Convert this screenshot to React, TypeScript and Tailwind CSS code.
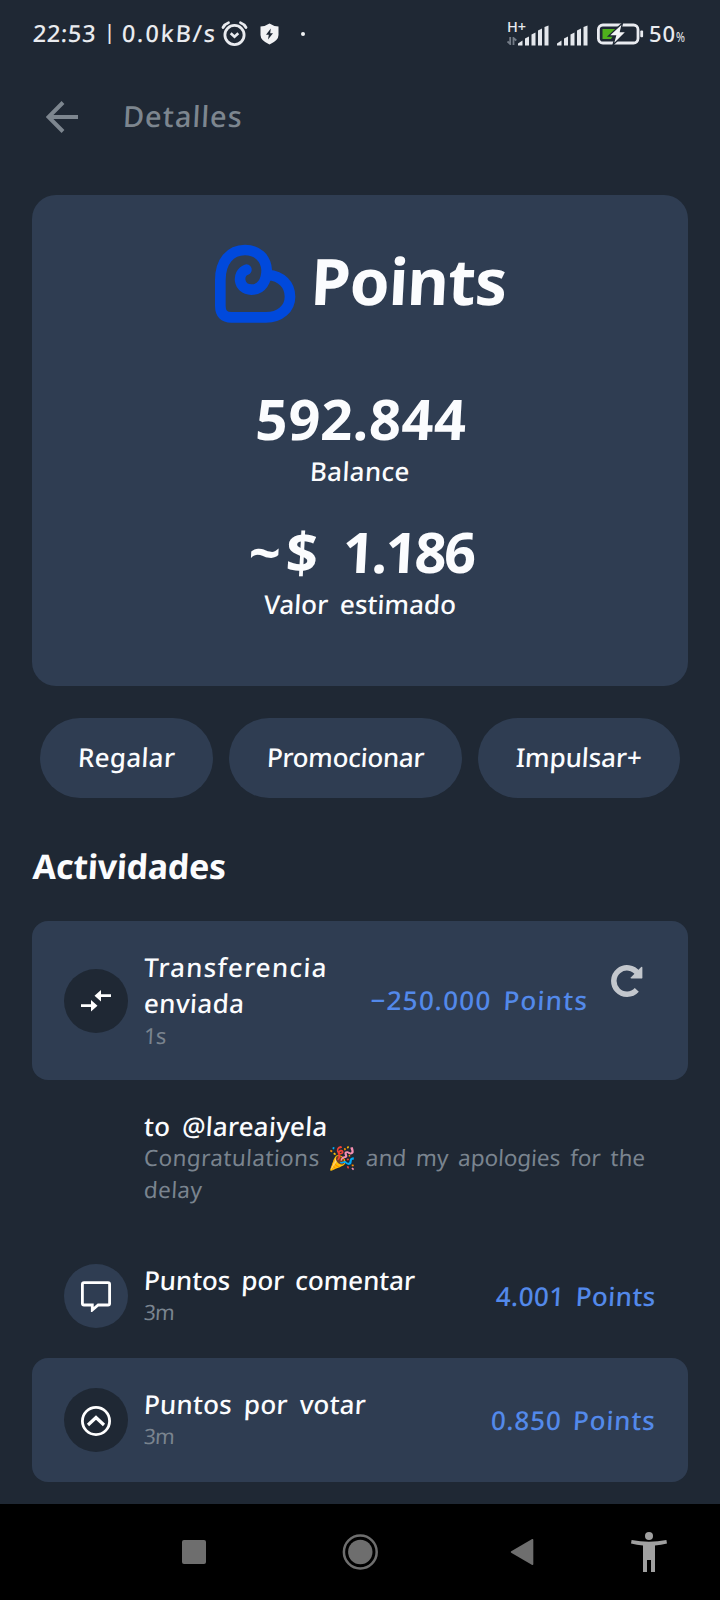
import React from "react";

function Skewed({ className, children }: { className: string; children: React.ReactNode }) {
  return <span className={`inline-block -skew-x-3 whitespace-nowrap ${className}`}>{children}</span>;
}

function AlarmIcon() {
  return (
    <svg width="27" height="26" viewBox="0 0 27 26" fill="none" stroke="#e9ebef" strokeWidth="2.8">
      <circle cx="13.5" cy="14" r="9.6" />
      <path d="M2 6.5Q4 3 7.5 1.8M25 6.5Q23 3 19.5 1.8" strokeLinecap="round" />
      <path d="M9.7 12.2l3.8 3.6 3.8-3.6" strokeWidth="2.6" />
    </svg>
  );
}

function ShieldIcon() {
  return (
    <svg width="19" height="22" viewBox="0 0 19 22">
      <path d="M9.5.5Q13 3 18.5 3.6V12Q18.5 17.5 9.5 21.5Q.5 17.5.5 12V3.6Q6 3 9.5.5Z" fill="#f1f2f4" />
      <path d="M10.8 5.5L6 11.8H8.8L8 16.5L13 10.2H10.2Z" fill="#1f2834" />
    </svg>
  );
}

function SignalIcon() {
  return (
    <svg width="31" height="21" viewBox="0 0 31 21" fill="#e4e7ec">
      <path d="M0 20.5V18.5L4.5 15.5V20.5ZM7 20.5V13.5L11 11.5V20.5ZM13.5 20.5V9.5L17.5 7.5V20.5ZM20 20.5V5.5L24 3.5V20.5ZM26.5 20.5V2L30.5 .5V20.5Z" />
    </svg>
  );
}

function BatteryIcon() {
  return (
    <svg width="47" height="22" viewBox="0 0 47 22">
      <rect x="1.4" y="2" width="39.6" height="18" rx="4.5" fill="none" stroke="#e9ebf0" strokeWidth="2.8" />
      <rect x="43.3" y="7.6" width="2.8" height="6.6" rx="1" fill="#e9ebf0" />
      <path d="M5.5 6H20L14 16H5.5Z" fill="#4fb01c" />
      <path d="M25.5 0L11.5 13H18.5L16 22L29.5 8.5H23.5Z" fill="#f4f5f7" stroke="#1f2834" strokeWidth="1.3" />
    </svg>
  );
}

function HeartLogo() {
  return (
    <svg width="84" height="82" viewBox="99 189 252 246" fill="none" stroke="#0049dc" strokeWidth="32" strokeLinecap="round">
      <path d="M199 269C171 279 173 328 214 329C245 329 260 302 260 270C258 234 232 210 195 210C150 210 121 245 121 300V378Q121 412 154 412H258C300 412 330 386 330 350C330 314 305 288 264 285" />
    </svg>
  );
}

function TransferIcon() {
  return (
    <svg width="30" height="22" viewBox="0 0 30 22" fill="#fff">
      <path d="M0 14.2H10V10L16.5 15.8L10 21.4V17H0ZM30 4.2H20V0L13.5 5.8L20 11.4V7H30Z" />
    </svg>
  );
}

function CommentIcon() {
  return (
    <svg width="32" height="32" viewBox="0 0 32 32" fill="none" stroke="#fff" strokeWidth="2.8">
      <path d="M4 2.6H28Q29.6 2.6 29.6 4.2V23.4Q29.6 25 28 25H18.2L12.3 30V25H4Q2.4 25 2.4 23.4V4.2Q2.4 2.6 4 2.6Z" />
    </svg>
  );
}

function VoteIcon() {
  return (
    <svg width="32" height="32" viewBox="0 0 32 32" fill="none" stroke="#fff" strokeWidth="2.8">
      <circle cx="16" cy="16" r="13.6" />
      <path d="M8 20L16 12.5L24 20" strokeWidth="3.2" />
    </svg>
  );
}

function Badge({ className, children }: { className: string; children: React.ReactNode }) {
  return (
    <div className={`flex size-16 shrink-0 items-center justify-center rounded-full ${className}`}>{children}</div>
  );
}

function Pill({ className, children }: { className: string; children: React.ReactNode }) {
  return (
    <button className={`flex h-20 items-center justify-center rounded-full bg-[#2f3d52] pb-px text-[26px] font-medium ${className}`}>
      {children}
    </button>
  );
}

export default function App() {
  return (
    <div className="flex h-[1600px] w-[720px] flex-col overflow-hidden bg-[#1f2834] font-['Noto_Sans','Noto_Color_Emoji',sans-serif] font-medium text-[#fbfcfe]">
      <div className="flex h-[66px] shrink-0 items-start pr-[33px] pl-[33px] text-[#e9ebef]">
        <div className="mt-[17px] flex w-[187px] text-[23.5px] leading-8">
          <Skewed className="w-[71px] tracking-[0.6px]">22:53</Skewed>
          <span className="w-[18px] text-[20px] leading-[30px]">|</span>
          <Skewed className="tracking-[1.8px]">0.0kB/s</Skewed>
        </div>
        <div className="mt-[21px] ml-px"><AlarmIcon /></div>
        <div className="mt-[23px] ml-[12px]"><ShieldIcon /></div>
        <div className="mt-[32px] ml-[22px] size-1 rounded-full bg-[#f1f2f4]" />
        <div className="mt-[19px] ml-auto flex w-[10px] flex-col">
          <span className="h-[16px] text-[14.5px] leading-[15px] whitespace-nowrap">H+</span>
          <svg className="mt-[2px]" width="10" height="8" viewBox="0 0 10 8" fill="none" stroke="#747c87" strokeWidth="1.8">
            <path d="M3.2 0V7L.5 4.5M6.5 8V1L9.3 3.5" />
          </svg>
        </div>
        <div className="mt-[24.5px] ml-px"><SignalIcon /></div>
        <div className="mt-[24.5px] ml-2"><SignalIcon /></div>
        <div className="mt-[23px] ml-[9px]"><BatteryIcon /></div>
        <div className="mt-[16.5px] ml-[5px] flex w-[38px] items-baseline leading-8">
          <span className="text-[22px] tracking-[0.8px]">50</span>
          <span className="origin-left scale-x-80 text-[13.5px] font-normal">%</span>
        </div>
      </div>

      <header className="flex h-[129px] shrink-0 items-start pt-[30px] pl-[46px] text-[#7d868f]">
        <svg className="mt-[5px]" width="33" height="32" viewBox="0 0 33 32" fill="none" stroke="#7d868f" strokeWidth="4">
          <path d="M32 16H3M17 1.5L2.5 16L17 30.5" />
        </svg>
        <Skewed className="ml-[44px] text-[29px] leading-10 tracking-[1px]">Detalles</Skewed>
      </header>

      <section className="mx-8 flex h-[491px] shrink-0 flex-col items-center rounded-3xl bg-[#2f3d52] pt-[48px]">
        <div className="flex h-20 items-start gap-[14px]">
          <HeartLogo />
          <Skewed className="mt-[2px] text-[64px] leading-[72px] font-bold tracking-[-0.8px]">Points</Skewed>
        </div>
        <Skewed className="mt-[63px] ml-[2px] text-[56px] leading-16 font-bold tracking-[0.4px]">592.844</Skewed>
        <Skewed className="mt-1 text-[26px] leading-[34px] tracking-[0.3px]">Balance</Skewed>
        <Skewed className="mt-[31px] ml-[3px] text-[56px] leading-16 font-bold">
          <span className="tracking-[5px]">~$ </span>
          <span className="tracking-[-2.5px]">1.186</span>
        </Skewed>
        <Skewed className="mt-1 ml-px text-[26px] leading-[34px] [word-spacing:5px]">Valor estimado</Skewed>
      </section>

      <div className="mx-10 mt-[32px] flex shrink-0 justify-between">
        <Pill className="w-[173px]"><Skewed className="tracking-[0.3px]">Regalar</Skewed></Pill>
        <Pill className="w-[233px]"><Skewed className="tracking-[-0.3px]">Promocionar</Skewed></Pill>
        <Pill className="w-[202px]"><Skewed className="tracking-[-0.1px]">Impulsar+</Skewed></Pill>
      </div>

      <h2 className="mt-[44px] ml-[33px] h-12 shrink-0 text-[34px] leading-12 font-bold">
        <Skewed className="tracking-[-0.3px]">Actividades</Skewed>
      </h2>

      <div className="mx-8 mt-[31px] flex h-[159px] shrink-0 rounded-2xl bg-[#2f3d52] pt-[28px] pr-[45px] pl-8">
        <Badge className="mt-5 bg-[#1f2834]"><TransferIcon /></Badge>
        <div className="ml-[16px] flex flex-col items-start text-[26px] leading-9">
          <Skewed className="tracking-[1.2px]">Transferencia</Skewed>
          <Skewed className="tracking-[0.4px]">enviada</Skewed>
          <Skewed className="text-[22px] leading-7 font-normal tracking-[-0.5px] text-[#7a848f]">1s</Skewed>
        </div>
        <Skewed className="mt-[33px] ml-auto text-[26px] leading-9 tracking-[1.2px] text-[#5389ea] [word-spacing:4px]">−250.000 Points</Skewed>
        <svg className="mt-[16px] ml-[24px] shrink-0" width="32" height="32" viewBox="0 0 32 32" fill="none">
          <path d="M26.8 8.4A13.2 13.2 0 1 0 25.8 24.9" stroke="#c3c7cd" strokeWidth="5.5" />
          <path d="M30.2 2Q31.4 1.2 31.4 3V12.4Q31.4 13.6 30.2 13.6H20.5Q19 13.4 20 12.2Z" fill="#c3c7cd" />
        </svg>
      </div>

      <div className="ml-[144px] flex h-[154px] shrink-0 flex-col items-start pt-[29px]">
        <Skewed className="text-[26px] leading-[34px] tracking-[0.2px] [word-spacing:5px]">to @lareaiyela</Skewed>
        <div className="flex h-[30.5px] text-[22.5px] leading-[30.5px] font-normal text-[#7a848f]">
          <Skewed className="w-[184px] tracking-[0.4px]">Congratulations</Skewed>
          <span className="w-[38px]">🎉</span>
          <Skewed className="tracking-[-0.05px] [word-spacing:4px]">and my apologies for the</Skewed>
        </div>
        <Skewed className="text-[22.5px] leading-[31px] font-normal tracking-[0.4px] text-[#7a848f]">delay</Skewed>
      </div>

      <div className="mx-8 flex h-[124px] shrink-0 items-center px-8">
        <Badge className="bg-[#2f3d52]"><CommentIcon /></Badge>
        <div className="ml-[16px] flex flex-col items-start pb-[5px] text-[26px] leading-9">
          <Skewed className="tracking-[-0.1px] [word-spacing:4.5px]">Puntos por comentar</Skewed>
          <Skewed className="text-[21px] leading-7 font-normal tracking-[-0.8px] text-[#7a848f]">3m</Skewed>
        </div>
        <Skewed className="ml-auto pb-px text-[26px] leading-9 tracking-[0.4px] text-[#5389ea] [word-spacing:4px]">4.001 Points</Skewed>
      </div>

      <div className="mx-8 flex h-[124px] shrink-0 items-center rounded-2xl bg-[#2f3d52] px-8">
        <Badge className="bg-[#1f2834] pt-0.5"><VoteIcon /></Badge>
        <div className="ml-[16px] flex flex-col items-start pb-[5px] text-[26px] leading-9">
          <Skewed className="tracking-[0.2px] [word-spacing:5px]">Puntos por votar</Skewed>
          <Skewed className="text-[21px] leading-7 font-normal tracking-[-0.8px] text-[#7a848f]">3m</Skewed>
        </div>
        <Skewed className="ml-auto pb-px text-[26px] leading-9 tracking-[0.8px] text-[#5389ea] [word-spacing:4px]">0.850 Points</Skewed>
      </div>

      <nav className="mt-auto flex h-24 shrink-0 items-center bg-black pr-[53px] pl-[182px]">
        <div className="size-6 rounded-[2px] bg-[#6e6e6e]" />
        <svg className="ml-[136px]" width="36" height="36" viewBox="0 0 36 36">
          <circle cx="18.3" cy="18" r="16.4" fill="none" stroke="#6e6e6e" strokeWidth="2.5" />
          <circle cx="18.3" cy="18" r="12.2" fill="#6e6e6e" />
        </svg>
        <svg className="ml-[132px]" width="24" height="28" viewBox="0 0 24 28">
          <path d="M22.2 1Q23.3.6 23.3 2V26Q23.3 27.4 22.2 27L1.2 14.8Q.2 14 1.2 13.2Z" fill="#6e6e6e" />
        </svg>
        <svg className="ml-auto" width="36" height="40" viewBox="0 0 36 40" fill="#a0a0a0">
          <circle cx="18" cy="4" r="4" />
          <path d="M.6 8Q18 11.6 35.4 8L36 11.6Q30 13 24 13.5V40H20V28H16V40H12V13.5Q6 13 0 11.6Z" />
        </svg>
      </nav>
    </div>
  );
}
